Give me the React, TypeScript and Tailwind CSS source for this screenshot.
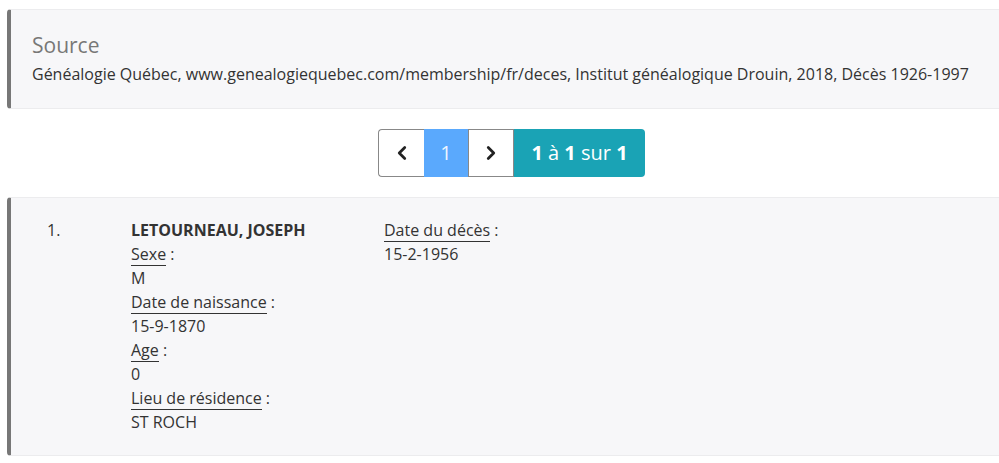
import { ChevronLeft, ChevronRight } from "lucide-react";

const fields = [
  { label: "Sexe", value: "M" },
  { label: "Date de naissance", value: "15-9-1870" },
  { label: "Age", value: "0" },
  { label: "Lieu de résidence", value: "ST ROCH" },
];

function Label({ text }: { text: string }) {
  return (
    <div>
      <span className="border-b border-[#333]">{text}</span> :
    </div>
  );
}

export default function App() {
  return (
    <div
      className="min-h-[463px] bg-white pl-[7px] pt-[9px] text-[#333]"
      style={{ fontFamily: '"Open Sans", "Liberation Sans", sans-serif' }}
    >
      {/* Source */}
      <div className="h-[100px] rounded-l-[4px] border-y border-[#ececee] border-l-[4px] border-l-[#777] bg-[#f7f7f9] pl-[21px] pt-[22px]">
        <h4 className="text-[21px] leading-[26px] text-[#777]">Source</h4>
        <p className="mt-[4px] text-[16px] leading-[24px]">
          Généalogie Québec, www.genealogiequebec.com/membership/fr/deces, Institut généalogique Drouin, 2018, Décès 1926-1997
        </p>
      </div>

      {/* Pagination */}
      <div className="mt-[20px] flex justify-center pl-[17px]">
        <div className="flex h-[48px] text-[20px]">
          <button className="flex w-[46px] items-center justify-center rounded-l-[4px] border border-r-0 border-[#888] bg-white text-[#222]">
            <ChevronLeft size={22} strokeWidth={3} />
          </button>
          <button className="flex w-[44px] items-center justify-center border-y border-[#5aa9fd] bg-[#5aa9fd] text-[#eef5ff]">
            1
          </button>
          <button className="flex w-[46px] items-center justify-center border border-[#888] bg-white text-[#222]">
            <ChevronRight size={22} strokeWidth={3} />
          </button>
          <div className="flex w-[131px] items-center justify-center rounded-r-[4px] bg-[#1aa3b5] text-white">
            <b>1</b>&nbsp;à&nbsp;<b>1</b>&nbsp;sur&nbsp;<b>1</b>
          </div>
        </div>
      </div>

      {/* Record */}
      <div className="mt-[20px] h-[259px] rounded-l-[4px] border-y border-[#ececee] border-l-[4px] border-l-[#777] bg-[#f7f7f9] pl-[36px] pt-[20px] text-[16px] leading-[24px]">
        <div className="grid grid-cols-[84px_253px_1fr]">
          <div>1.</div>
          <div>
            <div className="font-bold">LETOURNEAU, JOSEPH</div>
            {fields.map((f) => (
              <div key={f.label}>
                <Label text={f.label} />
                <div>{f.value}</div>
              </div>
            ))}
          </div>
          <div>
            <Label text="Date du décès" />
            <div>15-2-1956</div>
          </div>
        </div>
      </div>
    </div>
  );
}
